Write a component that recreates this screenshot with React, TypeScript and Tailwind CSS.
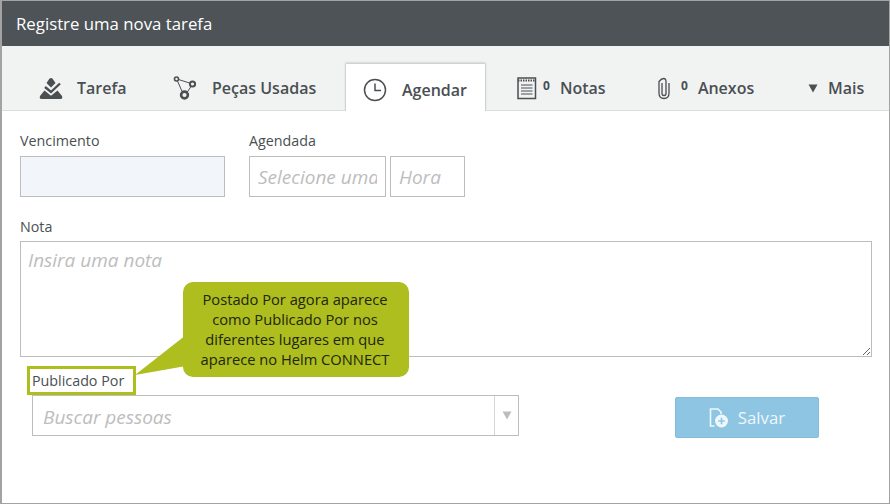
import React from 'react';

function TaskIcon() {
  return (
    <svg width="24" height="22" viewBox="0 0 24 22" fill="#4a4f52">
      <path d="M12 1q1.500 0 2.500 2l2 3L12 10.500 7.500 6l2-3q1-2 2.500-2z" />
      <path d="M6 10l6 5L21 6.500" fill="none" stroke="#4a4f52" strokeWidth="2.400" />
      <path d="M5.500 13.500l6.500 5.300 6.500-5.300 4.500 5.500q1 3-1.500 3H2.500q-2.500 0-1.500-3z" />
    </svg>
  );
}

function PartsIcon() {
  return (
    <svg width="24" height="28" viewBox="0 0 24 28" fill="none" stroke="#4a4f52">
      <circle cx="3.500" cy="5" r="2" strokeWidth="1.600" />
      <circle cx="19.500" cy="10" r="2.600" strokeWidth="2" />
      <circle cx="11.500" cy="21" r="3.400" strokeWidth="2.600" />
      <path d="M5.500 5.500l11 3.500M4.500 7l4.800 11M18 12.500l-4 6" strokeWidth="1" />
    </svg>
  );
}

function ClockIcon() {
  return (
    <svg width="24" height="24" viewBox="0 0 24 24" fill="none" stroke="#4a4f52" strokeWidth="1.500">
      <circle cx="12" cy="12" r="10.500" />
      <path d="M12 5.500V12.500H18" />
    </svg>
  );
}

function NotesIcon() {
  return (
    <svg className="-mr-[4px]" width="20" height="24" viewBox="0 0 20 24" fill="none" stroke="#4a4f52">
      <rect x="1" y="2" width="17.500" height="20.500" strokeWidth="1.500" />
      <path d="M1 4.500h17.500" strokeWidth="2" strokeDasharray="1.500 1" />
      <path d="M4 9h11.500M4 12h11.500M4 15h11.500M4 18h11.500" strokeWidth="1" />
    </svg>
  );
}

function ClipIcon() {
  return (
    <svg width="14" height="23" viewBox="0 0 14 23" fill="none" stroke="#4a4f52" strokeWidth="1.300">
      <path d="M5 6v10.500q0 2 2 2t2-2V4.500Q9 1.500 6.700 1.500T2 4.500V16q0 5.500 5 5.500t5-5.500V6" />
    </svg>
  );
}

function SaveIcon() {
  return (
    <svg width="20" height="20" viewBox="0 0 20 20" fill="none">
      <path d="M5.500 18H1.500V1H9l3 3v2" stroke="#eef7fb" strokeWidth="1.600" />
      <circle cx="12.500" cy="13" r="6.500" fill="#eef7fb" />
      <path d="M12.500 9.800v6.400M9.300 13h6.400" stroke="#8dc5e3" strokeWidth="1.600" />
    </svg>
  );
}

function Tab({ icon, label, count, className }: { icon: React.ReactNode; label: string; count?: string; className: string }) {
  return (
    <div className={`flex h-[48px] shrink-0 items-center pt-[4px] ${className}`}>
      {icon}
      {count && <span className="-mt-[5px] text-[12px] font-bold text-[#4a4f52]">{count}</span>}
      <span className="text-[16px] font-semibold text-[#4a4f52]">{label}</span>
    </div>
  );
}

export default function App() {
  return (
    <div className="relative flex h-[504px] w-[890px] flex-col border-t border-r border-b border-l-2 border-[#a3a3a3] bg-white font-['Open_Sans',sans-serif] text-[14.3px] text-[#4a4f52]">
      <div className="flex h-[45px] shrink-0 items-center bg-[#4d5357] pl-[14px] text-[16.8px] text-white">Registre uma nova tarefa</div>

      <div className="flex h-[65px] shrink-0 items-end border-b border-[#dcdede] bg-[#f1f3f3] pl-[23px]">
        <Tab icon={<TaskIcon />} label="Tarefa" className="w-[145px] gap-[14px] pl-[14px]" />
        <Tab icon={<PartsIcon />} label="Peças Usadas" className="w-[175px] gap-[15px] pl-[3px]" />
        <Tab icon={<ClockIcon />} label="Agendar" className="z-10 -mb-px w-[141px] gap-[15px] rounded-t-[2px] border border-b-0 border-[#d0d2d2] bg-white pl-[17px] shadow-[0_-1px_2px_rgba(0,0,0,0.1)]" />
        <Tab icon={<NotesIcon />} count="0" label="Notas" className="w-[140px] gap-[10px] pl-[31px]" />
        <Tab icon={<ClipIcon />} count="0" label="Anexos" className="w-[150px] gap-[10px] pl-[31px]" />
        <div className="flex h-[48px] items-center gap-[10px] pt-[4px] pl-[32px] text-[16px] font-semibold">
          <svg width="10" height="10" viewBox="0 0 10 10" fill="#4a4f52"><path d="M0.500 1.500h9L5 9.500z" /></svg>
          Mais
        </div>
      </div>

      <div className="flex flex-col pt-[20px] pl-[18px]">
        <div className="flex gap-[24px]">
          <div className="flex flex-col gap-[5px]">
            <label className="leading-[20px]">Vencimento</label>
            <div className="h-[41px] w-[205px] border border-[#bdbdbd] bg-[#f2f5fa]" />
          </div>
          <div className="flex flex-col gap-[5px]">
            <label className="leading-[20px]">Agendada</label>
            <div className="flex gap-[4px]">
              <input readOnly placeholder="Selecione uma data" className="h-[41px] w-[137px] border border-[#bdbdbd] px-[8px] text-[19px] italic outline-none placeholder:text-[#bdbdbd]" />
              <input readOnly placeholder="Hora" className="h-[41px] w-[75px] border border-[#bdbdbd] px-[8px] text-[19px] italic outline-none placeholder:text-[#bdbdbd]" />
            </div>
          </div>
        </div>

        <label className="mt-[20px] leading-[20px]">Nota</label>
        <textarea readOnly placeholder="Insira uma nota" className="mt-[4px] block h-[116px] w-[852px] border border-[#bdbdbd] px-[7px] py-[4px] text-[19px] italic outline-none placeholder:text-[#bdbdbd]" />

        <div className="flex flex-col pl-[12px]">
          <label className="mt-[14px] leading-[20px]">Publicado Por</label>
          <div className="flex items-start">
            <div className="mt-[4px] flex h-[41px] w-[487px] items-center border border-[#bdbdbd]">
              <span className="flex-1 pt-[3px] pl-[10px] text-[19px] text-[#bdbdbd] italic">Buscar pessoas</span>
              <div className="flex h-full w-[24px] items-center justify-center border-l border-[#d5d5d5]">
                <svg width="10" height="9" viewBox="0 0 10 9" fill="#bdbdbd"><path d="M0.500 0.500h9L5 8.500z" /></svg>
              </div>
            </div>
            <button className="mt-[6px] ml-[156px] flex h-[41px] w-[144px] items-center justify-center gap-[9px] rounded-[2px] border border-[#84bcd9] bg-[#8dc5e3] text-[16.8px] font-normal text-[#eef7fb]">
              <SaveIcon />
              Salvar
            </button>
          </div>
        </div>
      </div>

      {/* callout over the form */}
      <div className="absolute top-[365px] left-[25px] h-[29px] w-[109px] border-[3px] border-[#adbe1e]" />
      <svg className="absolute top-[331px] left-[130px]" width="56" height="46" viewBox="0 0 56 46" fill="#adbe1e">
        <path d="M54 3V34L3 43z" />
      </svg>
      <div className="absolute top-[281px] left-[181px] flex h-[95px] w-[226px] items-center justify-center rounded-[10px] bg-[#adbe1e] pr-[2px] pb-[2px] text-center text-[14.7px] leading-[20px] text-[#23260f]">
        <p>Postado Por agora aparece<br />como Publicado Por nos<br />diferentes lugares em que<br />aparece no Helm CONNECT</p>
      </div>
    </div>
  );
}
